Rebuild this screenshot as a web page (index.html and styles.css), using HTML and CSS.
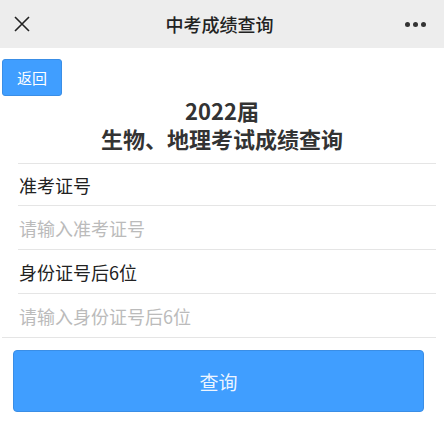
FILE: index.html
```html
<!DOCTYPE html>
<html lang="zh-CN">
<head>
<meta charset="utf-8">
<title>中考成绩查询</title>
<link rel="stylesheet" href="styles.css">
</head>
<body>
<header class="topbar">
  <span class="close">
    <svg width="16" height="16" viewBox="0 0 16 16"><path d="M1 1L15 15M15 1L1 15" stroke="#222" stroke-width="1.6" fill="none"/></svg>
  </span>
  <span class="topbar-title">中考成绩查询</span>
  <span class="more"><i></i><i></i><i></i></span>
</header>
<main class="page">
  <button class="back">返回</button>
  <h1 class="title">
    <span class="title-line">2022届</span>
    <span class="title-line">生物、地理考试成绩查询</span>
  </h1>
  <div class="form">
    <div class="row row-first label">准考证号</div>
    <div class="row placeholder">请输入准考证号</div>
    <div class="row label">身份证号后6位</div>
    <div class="row row-last placeholder">请输入身份证号后6位</div>
  </div>
  <button class="submit">查询</button>
</main>
</body>
</html>
```

FILE: styles.css
```css
html, body {
  margin: 0;
  padding: 0;
  background: #fff;
  font-family: "Noto Sans CJK SC", "Noto Sans", sans-serif;
  color: #222;
}
.topbar {
  height: 48px;
  background: #ededed;
  display: flex;
  align-items: center;
  justify-content: space-between;
  padding: 0 18px 0 14px;
}
.close {
  width: 16px;
  height: 16px;
  display: flex;
}
.topbar-title {
  font-size: 18px;
  font-weight: 500;
  color: #222;
  margin-left: 4px;
}
.more {
  display: flex;
  gap: 3px;
  width: 21px;
}
.more i {
  width: 5px;
  height: 5px;
  border-radius: 50%;
  background: #333;
}
.page {
  display: flex;
  flex-direction: column;
}
.back {
  align-self: flex-start;
  margin: 11px 0 0 2px;
  width: 60px;
  height: 37px;
  border: 1px solid #3a8ee6;
  border-radius: 3px;
  background: #409eff;
  color: #fff;
  font-family: inherit;
  font-size: 15px;
  padding: 0;
}
.title {
  margin: 0 0 11px;
  display: flex;
  flex-direction: column;
  align-items: center;
  font-size: 22px;
  font-weight: 700;
  color: #333;
}
.title-line {
  display: block;
  height: 28px;
  line-height: 28px;
}
.form {
  margin: 0 8px 0 2px;
  border-bottom: 1px solid #e5e5e5;
}
.row {
  margin-left: 16px;
  height: 43px;
  display: flex;
  align-items: center;
  padding-left: 1px;
  font-size: 18px;
  border-bottom: 1px solid #e5e5e5;
}
.row-first {
  border-top: 1px solid #e5e5e5;
  height: 41px;
}
.row-last {
  border-bottom: none;
}
.label {
  color: #222;
}
.placeholder {
  color: #bbb;
}
.submit {
  margin: 12px 20px 0 13px;
  height: 62px;
  border: 1px solid #3a8ee6;
  border-radius: 4px;
  background: #409eff;
  color: rgba(255,255,255,0.92);
  font-family: inherit;
  font-size: 19px;
  padding: 0;
}
```
